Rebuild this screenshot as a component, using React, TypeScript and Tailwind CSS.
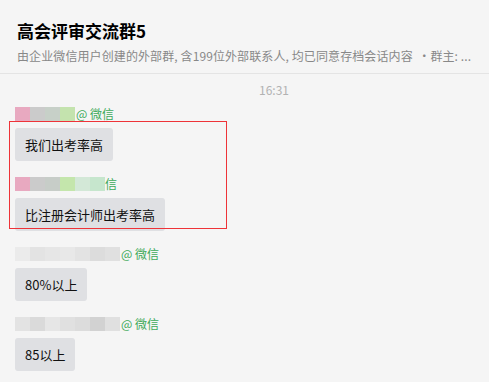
import React from "react";

const font = { fontFamily: '"Microsoft YaHei", "Noto Sans CJK SC", "Noto Sans", sans-serif' };

function Mosaic({ blocks }: { blocks: string[] }) {
  return (
    <div className="flex h-[14px]">
      {blocks.map((c, i) => (
        <div key={i} className="h-full w-[15px]" style={{ backgroundColor: c }} />
      ))}
    </div>
  );
}

function Message({ blocks, showTag, text }: { blocks: string[]; showTag: boolean; text: string }) {
  return (
    <div className="flex flex-col items-start">
      <div className="flex h-[16px] items-center">
        <Mosaic blocks={blocks} />
        {showTag && <span className="ml-[1px] text-[12px] leading-[16px] text-[#3eaa5a]">@ 微信</span>}
      </div>
      <div className="mt-[6px] rounded-[3px] bg-[#dfe0e3] px-[10px] py-[7px] text-[13px] leading-[19px] text-[#111]">
        {text}
      </div>
    </div>
  );
}

export default function App() {
  return (
    <div className="relative h-[382px] w-[489px] overflow-hidden bg-[#f5f5f5]" style={font}>
      <div className="border-b border-[#e4e4e4] px-[17px] pb-[8px] pt-[19px]">
        <div className="text-[17px] font-bold leading-[24px] text-black">高会评审交流群5</div>
        <div className="mt-[4px] whitespace-nowrap text-[12px] leading-[18px] tracking-[0.1px] text-[#888]">
          由企业微信用户创建的外部群, 含199位外部联系人, 均已同意存档会话内容 &nbsp;·群主: ...
        </div>
      </div>
      <div className="mt-[8px] flex justify-center pl-[59px] text-[12px] leading-[16px] text-[#b2b2b2]">16:31</div>
      <div className="mt-[8px] flex flex-col gap-[15px] px-[15px]">
        <Message blocks={["#e8a9c0", "#cbcbcb", "#c7d0c8", "#c4e3ae"]} showTag text="我们出考率高" />
        <div className="flex flex-col items-start">
          <div className="flex h-[16px] items-center">
            <Mosaic blocks={["#e8a9c0", "#cbcbcb", "#c7cdc8", "#c4e6ac", "#d3e8d7", "#c6e6cd"]} />
            <span className="text-[12px] leading-[16px] text-[#3eaa5a]">信</span>
          </div>
          <div className="mt-[6px] rounded-[3px] bg-[#dfe0e3] px-[10px] py-[7px] text-[13px] leading-[19px] text-[#111]">
            比注册会计师出考率高
          </div>
        </div>
        <Message
          blocks={["#ebebeb", "#e3e3e3", "#e6e6e6", "#e8e8e8", "#e3e3e3", "#dcdcdc", "#e0e0e0"]}
          showTag
          text="80%以上"
        />
        <Message
          blocks={["#e3e3e3", "#dadada", "#e6e6e6", "#e0e0e0", "#dcdcdc", "#d2d2d2", "#e0e0e0"]}
          showTag
          text="85以上"
        />
      </div>
      <div className="absolute left-[9px] top-[121px] h-[108px] w-[218px] border border-[#ee3338]" />
    </div>
  );
}
